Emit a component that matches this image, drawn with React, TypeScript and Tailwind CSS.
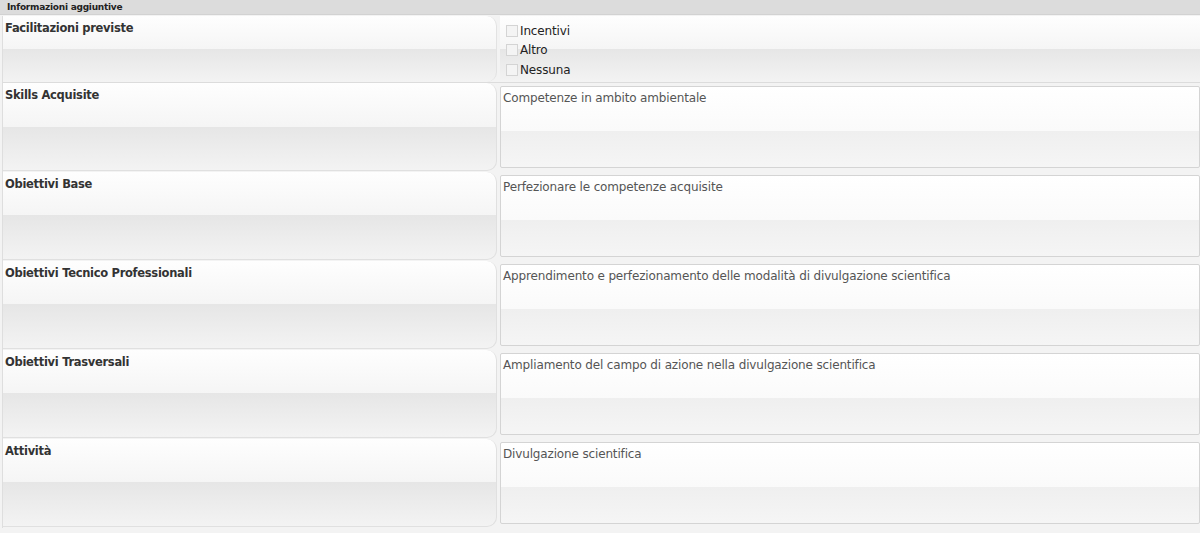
import React from 'react'

const gloss =
  'bg-[linear-gradient(to_bottom,#fefefe_0%,#f5f5f5_50%,#e6e6e6_50%,#f3f3f3_100%)]'
const boxGloss =
  'bg-[linear-gradient(to_bottom,#ffffff_0%,#fafafa_55%,#efefef_55%,#f5f5f5_100%)]'

const rows = [
  { label: 'Skills Acquisite', value: 'Competenze in ambito ambientale' },
  { label: 'Obiettivi Base', value: 'Perfezionare le competenze acquisite' },
  {
    label: 'Obiettivi Tecnico Professionali',
    value: 'Apprendimento e perfezionamento delle modalità di divulgazione scientifica',
  },
  {
    label: 'Obiettivi Trasversali',
    value: 'Ampliamento del campo di azione nella divulgazione scientifica',
  },
  { label: 'Attività', value: 'Divulgazione scientifica' },
]

const options = ['Incentivi', 'Altro', 'Nessuna']

export default function App() {
  return (
    <div className="w-[1200px] h-[533px] overflow-hidden bg-[#f3f3f3] font-['DejaVu_Sans',sans-serif]">
      <div className="h-[15px] bg-[#dcdcdc] pl-[7px] text-[9px] tracking-[-0.25px] leading-[15px] font-bold text-[#222] border-b border-[#d2d2d2]">
        Informazioni aggiuntive
      </div>
      <div className="flex flex-col pl-[2px] pt-[1px]">
        <div className="flex h-[67px] border-l border-[#dedede] border-b border-b-[#dcdcdc]">
          <div
            className={`w-[494px] shrink-0 rounded-r-[10px] border-r border-[#e2e2e2] ${gloss} pl-[2px] pt-[5px] text-[11.5px] tracking-[-0.3px] leading-[15px] font-bold text-[#333]`}
          >
            Facilitazioni previste
          </div>
          <div className={`flex-1 ml-[3px] ${gloss} pl-[6px] pt-[5px] flex flex-col`}>
            {options.map((o) => (
              <label key={o} className="flex items-center h-[19.5px] text-[12px] tracking-[-0.15px] text-[#222]">
                <span className="w-[12px] h-[12px] border border-[#d4d4d4] bg-[#f4f4f4] mr-[2px]" />
                {o}
              </label>
            ))}
          </div>
        </div>
        {rows.map((r) => (
          <div key={r.label} className="flex h-[89px] border-l border-[#dedede]">
            <div className="flex w-[494px] shrink-0 pb-[1px]">
              <div
                className={`flex-1 rounded-r-[10px] border-r border-b border-[#e0e0e0] ${gloss} pl-[2px] pt-[5px] text-[11.5px] tracking-[-0.3px] leading-[15px] font-bold text-[#333]`}
              >
                {r.label}
              </div>
            </div>
            <div className="flex-1 pl-[3px] pt-[3px] pb-[4px]">
              <div
                className={`h-full rounded-[2px] border border-[#d4d4d4] ${boxGloss} px-[2px] pt-[4px] text-[12px] tracking-[-0.15px] leading-[15px] text-[#555]`}
              >
                {r.value}
              </div>
            </div>
          </div>
        ))}
      </div>
    </div>
  )
}
